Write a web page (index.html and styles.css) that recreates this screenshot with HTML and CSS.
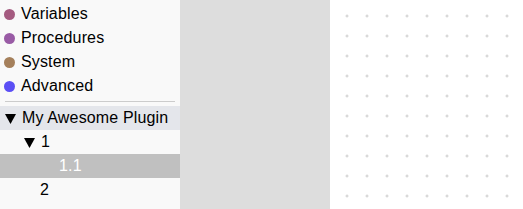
FILE: index.html
```html
<!DOCTYPE html>
<html>
<head>
<meta charset="utf-8">
<link rel="stylesheet" href="styles.css">
</head>
<body>
<div class="app">
  <div class="toolbox">
    <div class="cat"><span class="dot dot-var"></span><span class="label">Variables</span></div>
    <div class="cat"><span class="dot dot-proc"></span><span class="label">Procedures</span></div>
    <div class="cat"><span class="dot dot-sys"></span><span class="label">System</span></div>
    <div class="cat"><span class="dot dot-adv"></span><span class="label">Advanced</span></div>
    <div class="sep"></div>
    <div class="row row-open lvl0"><svg class="tri" width="11" height="10" viewBox="0 0 11 10"><polygon points="0,0 11,0 5.5,10" fill="#000"/></svg><span class="label">My Awesome Plugin</span></div>
    <div class="row lvl1"><svg class="tri" width="11" height="10" viewBox="0 0 11 10"><polygon points="0,0 11,0 5.5,10" fill="#000"/></svg><span class="label">1</span></div>
    <div class="row row-sel lvl2"><span class="label">1.1</span></div>
    <div class="row lvl1b"><span class="label">2</span></div>
  </div>
  <div class="flyout"></div>
  <div class="workspace">
    <svg class="grid" width="100%" height="100%">
      <defs>
        <pattern id="g" x="7" y="6" width="20" height="20" patternUnits="userSpaceOnUse">
          <line x1="8.5" y1="10" x2="11.5" y2="10" stroke="#ccc" stroke-width="1"/>
          <line x1="10" y1="8.5" x2="10" y2="11.5" stroke="#ccc" stroke-width="1"/>
        </pattern>
      </defs>
      <rect width="100%" height="100%" fill="url(#g)"/>
    </svg>
  </div>
</div>
</body>
</html>
```
FILE: styles.css
```css
html, body {
  margin: 0;
  padding: 0;
  width: 523px;
  height: 209px;
  overflow: hidden;
  background: #fff;
}
.app {
  display: flex;
  height: 209px;
  font-family: "Liberation Sans", Arial, sans-serif;
  font-size: 16px;
  letter-spacing: 0.15px;
  color: #000;
}
.toolbox {
  width: 180px;
  flex: none;
  background: #f9f9f9;
  padding-top: 2px;
  box-sizing: border-box;
}
.cat {
  height: 24px;
  display: flex;
  align-items: center;
  padding-left: 4px;
}
.dot {
  width: 11px;
  height: 11px;
  border-radius: 50%;
  margin-right: 6px;
}
.dot-var { background: #a55b80; }
.dot-proc { background: #995ba5; }
.dot-sys { background: #a5805b; }
.dot-adv { background: #5b4ff5; }
.sep {
  height: 1px;
  background: #ccc;
  margin: 3px 5px 4px 5px;
}
.row {
  height: 24px;
  display: flex;
  align-items: center;
}
.row .tri {
  margin-right: 6px;
  margin-top: 1px;
}
.lvl0 { padding-left: 5px; }
.lvl1 { padding-left: 24px; }
.lvl2 { padding-left: 59px; }
.lvl1b { padding-left: 40px; }
.row-open { background: #e4e6eb; }
.row-sel { background: #c0c0c0; color: #fff; }
.flyout {
  width: 150px;
  flex: none;
  background: #ddd;
}
.workspace {
  flex: 1;
  background: #fff;
}
.grid { display: block; }
```
